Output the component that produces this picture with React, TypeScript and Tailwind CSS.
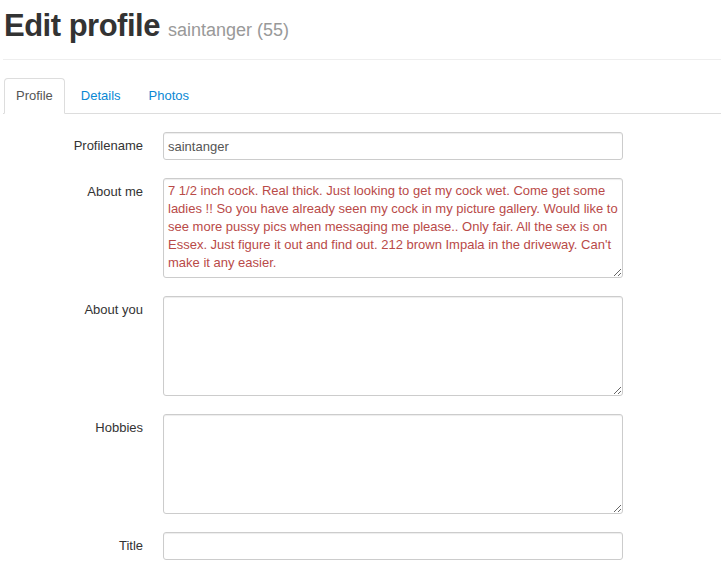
import React from "react";

const aboutMe =
  "7 1/2 inch cock. Real thick. Just looking to get my cock wet. Come get some ladies !! So you have already seen my cock in my picture gallery. Would like to see more pussy pics when messaging me please.. Only fair. All the sex is on Essex. Just figure it out and find out. 212 brown Impala in the driveway. Can't make it any easier.";

function Row({
  label,
  children,
  mt,
}: {
  label: string;
  children: React.ReactNode;
  mt?: boolean;
}) {
  return (
    <div className={`flex items-start ${mt ? "mt-[18px]" : ""}`}>
      <label className="w-[140px] shrink-0 text-right pt-[5px] leading-[18px] text-[13px] text-[#333]">
        {label}
      </label>
      <div className="ml-[20px] w-[460px]">{children}</div>
    </div>
  );
}

const inputCls =
  "block w-[460px] h-[28px] px-[4px] py-[4px] border border-[#ccc] rounded-[3px] text-[13px] leading-[18px] text-[#555] bg-white shadow-[inset_0_1px_1px_rgba(0,0,0,0.075)] outline-none";

const areaCls =
  "block w-[460px] h-[100px] px-[4px] py-[3px] border border-[#ccc] rounded-[3px] text-[13px] leading-[18px] text-[#555] bg-white shadow-[inset_0_1px_1px_rgba(0,0,0,0.075)] outline-none resize-y overflow-hidden";

export default function App() {
  return (
    <div
      className="min-h-[573px] bg-white px-[3px] text-[13px] text-[#333]"
      style={{ fontFamily: '"Liberation Sans", Arial, sans-serif' }}
    >
      <div className="pt-[8px]">
        <h1 className="h-[36px] text-[31px] leading-[36px] font-bold text-[#333] pl-px tracking-[-0.5px]">
          Edit profile{" "}
          <small className="text-[18px] leading-[18px] font-normal text-[#999] tracking-normal">
            saintanger (55)
          </small>
        </h1>
      </div>
      <div className="mt-[15px] border-t border-[#eee]" />
      <ul className="mt-[18px] flex border-b border-[#ddd] pl-px">
        <li className="-mb-px mr-[2px]">
          <a className="block px-[11px] py-[8px] leading-[18px] border border-[#ddd] border-b-transparent rounded-t-[4px] bg-white text-[#555] text-[13px]">
            Profile
          </a>
        </li>
        <li className="-mb-px mr-[2px]">
          <a className="block pl-[13px] pr-[12px] py-[8px] leading-[18px] border border-transparent text-[#0a88d4] text-[13px]">
            Details
          </a>
        </li>
        <li className="-mb-px mr-[2px]">
          <a className="block px-[12px] py-[8px] leading-[18px] border border-transparent text-[#0a88d4] text-[13px]">
            Photos
          </a>
        </li>
      </ul>
      <form className="pt-[18px]">
        <Row label="Profilename">
          <input className={inputCls} defaultValue="saintanger" />
        </Row>
        <Row label="About me" mt>
          <textarea
            className={`${areaCls} border-[#b94a48] text-[#b94a48]`}
            defaultValue={aboutMe}
          />
        </Row>
        <Row label="About you" mt>
          <textarea className={areaCls} defaultValue="" />
        </Row>
        <Row label="Hobbies" mt>
          <textarea className={areaCls} defaultValue="" />
        </Row>
        <Row label="Title" mt>
          <input className={inputCls} defaultValue="" />
        </Row>
      </form>
    </div>
  );
}
